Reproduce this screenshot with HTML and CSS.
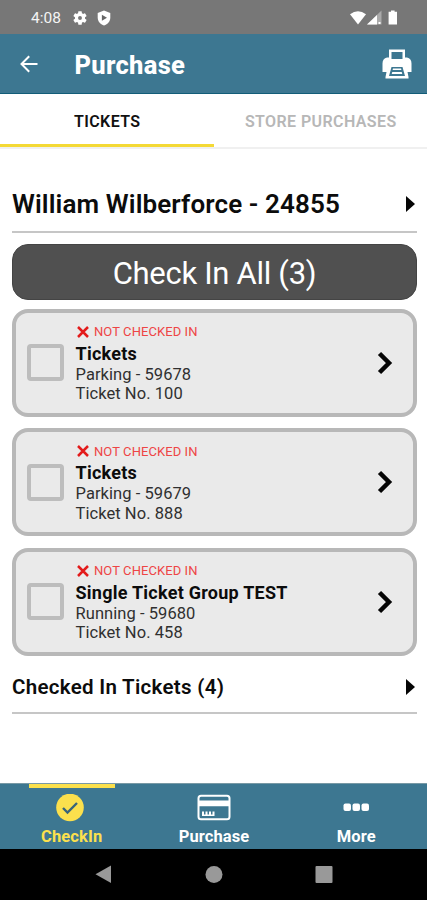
FILE: index.html
```html
<!DOCTYPE html>
<html lang="en">
<head>
<meta charset="utf-8">
<title>Purchase</title>
<link rel="stylesheet" href="styles.css">
</head>
<body>
<div class="status">
  <span class="clock">4:08</span>
  <svg class="gear" width="14" height="14" viewBox="2 2 20 20"><path fill="#fff" d="M19.14 12.94c.04-.3.06-.61.06-.94s-.02-.64-.07-.94l2.03-1.58a.5.5 0 0 0 .12-.61l-1.92-3.32a.49.49 0 0 0-.59-.22l-2.39.96c-.5-.38-1.03-.7-1.62-.94l-.36-2.54a.48.48 0 0 0-.48-.41h-3.84c-.24 0-.43.17-.47.41l-.36 2.54c-.59.24-1.13.57-1.62.94l-2.39-.96a.49.49 0 0 0-.59.22L2.74 8.87a.48.48 0 0 0 .12.61l2.03 1.58c-.05.3-.09.63-.09.94s.02.64.07.94l-2.03 1.58a.5.5 0 0 0-.12.61l1.92 3.32c.12.22.37.29.59.22l2.39-.96c.5.38 1.03.7 1.62.94l.36 2.54c.05.24.24.41.48.41h3.84c.24 0 .44-.17.47-.41l.36-2.54c.59-.24 1.13-.56 1.62-.94l2.39.96c.22.08.47 0 .59-.22l1.92-3.32a.5.5 0 0 0-.12-.61zM12 14.8a2.8 2.8 0 1 1 0-5.6 2.8 2.8 0 0 1 0 5.6z"/></svg>
  <svg class="shield" width="14" height="16" viewBox="0 0 14 16"><path fill="#fff" d="M7 .5 13.300 3v4.500c0 3.800-2.600 6.900-6.300 8-3.700-1.100-6.300-4.200-6.300-8V3z"/><path fill="#666" d="M4.900 4.700 10 7.700l-5.100 3z"/></svg>
  <span class="spacer"></span>
  <svg width="49" height="16" viewBox="0 0 49 16"><path fill="#fff" d="M0 4.200Q8-1.800 16 4.200L8 14.500z"/><path fill="#aaa" d="M31.500.5v14H17z"/><path fill="#fff" d="M27 5v9.500H17z"/><path fill="#fff" d="M28.500 12h2v2h-2zM41 .5h3.600v1.300h2.400V14.500h-8.400V1.800h2.400z"/></svg>
</div>
<header class="appbar">
  <svg width="18" height="18" viewBox="0 0 18 18" fill="none" stroke="#fff" stroke-width="2"><path d="M17.500 9H1.800M9.200 1.200 1.500 9l7.700 7.800"/></svg>
  <h1>Purchase</h1>
  <svg width="30" height="30" viewBox="0 0 30 30"><path fill="#fff" fill-rule="evenodd" d="M7 .5h16v8h2q4.500 1 4.500 6V23h-4l1 5v1.500H3.500V28l1-5h-4v-8.500q0-5 4.500-6h2zM9.500 3v7h11V3zM9.500 18 7 27h16l-2.500-9z"/><path fill="#fff" d="M11 19.500h8l.4 1.500h-8.800zM10.300 23h9.400l.6 2H9.700z"/></svg>
</header>
<nav class="tabs"><div class="tab active"><span class="t1">TICKETS</span></div><div class="tab"><span class="t2">STORE PURCHASES</span></div></nav>
<main>
  <div class="group owner"><span>William Wilberforce - 24855</span><i class="tri"></i></div>
  <button class="all"><span>Check In All (3)</span></button>
  <section class="cards">
    <article class="card"><i class="box"></i><div class="info"><div class="state"><svg width="12" height="12" viewBox="0 0 12 12"><path d="M1 1l10 10M11 1 1 11"/></svg><span>NOT CHECKED IN</span></div><h2 class="ticket">Tickets</h2><p>Parking - 59678</p><p>Ticket No. 100</p></div><svg class="chev" width="16" height="24" viewBox="0 0 16 24"><path d="M2.500 2.500 12 12l-9.500 9.500"/></svg></article>
    <article class="card"><i class="box"></i><div class="info"><div class="state"><svg width="12" height="12" viewBox="0 0 12 12"><path d="M1 1l10 10M11 1 1 11"/></svg><span>NOT CHECKED IN</span></div><h2 class="ticket">Tickets</h2><p>Parking - 59679</p><p>Ticket No. 888</p></div><svg class="chev" width="16" height="24" viewBox="0 0 16 24"><path d="M2.500 2.500 12 12l-9.500 9.500"/></svg></article>
    <article class="card"><i class="box"></i><div class="info"><div class="state"><svg width="12" height="12" viewBox="0 0 12 12"><path d="M1 1l10 10M11 1 1 11"/></svg><span>NOT CHECKED IN</span></div><h2 class="ticket">Single Ticket Group TEST</h2><p>Running - 59680</p><p>Ticket No. 458</p></div><svg class="chev" width="16" height="24" viewBox="0 0 16 24"><path d="M2.500 2.500 12 12l-9.500 9.500"/></svg></article>
  </section>
  <div class="group done"><span>Checked In Tickets (4)</span><i class="tri"></i></div>
</main>
<nav class="bottom">
  <div class="item on"><svg width="34" height="28" viewBox="0 0 34 28"><circle cx="17" cy="13.500" r="13.800" fill="#fbe04d"/><path d="m10 14 4.500 4.500 9.500-9.500" fill="none" stroke="#38647a" stroke-width="2.400"/></svg><span>CheckIn</span></div>
  <div class="item"><svg width="34" height="28" viewBox="0 0 34 28"><rect x="1.500" y="1.800" width="31" height="23.500" rx="2.500" fill="none" stroke="#fff" stroke-width="2"/><path fill="#fff" d="M2 6.500h31v5.800H2zM5 17.500h2v4H5zm3.500 0h2v4h-2zm3.500 0h2v4h-2zm3.500 0h2v4h-2zM5 20.500h12.500V22H5z"/></svg><span>Purchase</span></div>
  <div class="item"><svg width="34" height="28" viewBox="0 0 34 28" fill="#fff"><rect x="4.500" y="9.500" width="7.500" height="7.500" rx="2"/><rect x="13.500" y="9.500" width="7.500" height="7.500" rx="2"/><rect x="22.500" y="9.500" width="7.500" height="7.500" rx="2"/></svg><span>More</span></div>
</nav>
<footer class="system"><svg width="18" height="20" viewBox="0 0 18 20"><path fill="#999" d="M16 1.500v17.500L.5 10.300z"/></svg><svg width="18" height="20" viewBox="0 0 18 20"><circle cx="9" cy="10.500" r="8.500" fill="#999"/></svg><svg width="18" height="20" viewBox="0 0 18 20"><rect x=".5" y="2" width="17" height="17" rx="1" fill="#999"/></svg></footer>
</body>
</html>
```
FILE: styles.css
```css
* { box-sizing: border-box; }
body { margin: 0; width: 427px; height: 900px; overflow: hidden; display: flex; flex-direction: column; background: #fff; color: #0c0c0c; font-family: Roboto, sans-serif; }
h1, h2, p { margin: 0; }
svg { display: block; flex: none; }
.spacer { flex: 1; }
.status { height: 34px; flex: none; background: #777; display: flex; align-items: center; padding: 2px 28px 0 31px; }
.clock { color: #f4f4f4; font-size: 15.5px; width: 42px; }
.shield { margin-left: 10px; }
.appbar { height: 60px; flex: none; background: #3d7791; border-bottom: 1px solid #125d78; display: flex; align-items: center; padding: 0 15px 0 20px; color: #fff; }
.appbar h1 { flex: 1; margin-left: 36.5px; padding-top: 3px; font-size: 25.5px; font-weight: 800; letter-spacing: .3px; }
.tabs { height: 55px; flex: none; display: flex; border-bottom: 2px solid #f0f0f0; }
.tab { flex: 1; height: 53px; display: flex; justify-content: center; align-items: center; padding: 4px 0 0 1px; font-size: 16px; font-weight: 600; letter-spacing: .4px; color: #b7b7b7; border-bottom: 3px solid transparent; }
.tab.active { color: #111; border-color: #f4d935; }
main { flex: 1; padding: 0 10px 0 12px; }
.group { display: flex; align-items: center; justify-content: space-between; border-bottom: 2px solid #c6c6c6; font-weight: 600; }
.tri { border: 8px solid transparent; border-left: 9px solid #050505; border-right: 0; margin-right: 2px; }
.owner { height: 84px; padding-top: 27px; font-size: 26px; letter-spacing: .12px; }
.all { display: block; width: 405px; height: 56px; margin: 11px 0 9px; padding: 2px 0 0; border: 1px solid #444; border-radius: 16px; background: #505050; color: #fff; font: 400 31px Roboto, sans-serif; letter-spacing: -.3px; }
.cards { display: flex; flex-direction: column; gap: 11.7px; }
.card { height: 107.800px; border: 4px solid #b8b8b8; border-radius: 16px; background: #eaeaea; display: flex; align-items: center; padding: 0 20px 0 11px; }
.box { width: 37px; height: 37px; border: 4px solid #bdbdbd; border-radius: 4px; flex: none; }
.info { flex: 1; margin-left: 11.5px; }
.state { display: flex; align-items: center; gap: 5px; padding-left: 1.5px; height: 20px; color: #ee4545; font-size: 13px; letter-spacing: .08px; }
.state svg { stroke: #e31b1b; stroke-width: 2.500; }
.ticket { font-size: 18px; font-weight: 700; line-height: 23px; letter-spacing: .25px; }
.info p { font-size: 16.500px; line-height: 19.500px; color: #303030; letter-spacing: .06px; }
.chev { fill: none; stroke: #050505; stroke-width: 4.500; }
.done { height: 58px; font-size: 20.500px; padding-top: 6px; letter-spacing: .3px; }
.bottom { height: 66px; flex: none; display: flex; background: #3d7791; border-top: 1px solid #7899a5; color: #fff; }
.item { flex: 1; display: flex; flex-direction: column; align-items: center; padding: 10px 0 0 1px; font-size: 16.500px; font-weight: 700; gap: 5px; line-height: 20px; letter-spacing: .1px; position: relative; }
.on { color: #fbe04d; }
.item.on svg { margin-left: -4px; }
.on::before { content: ""; position: absolute; top: 0; left: 29px; width: 86px; height: 4px; background: #fbe04d; }
.system { height: 51px; flex: none; background: #000; display: flex; align-items: center; justify-content: center; gap: 92px; padding-bottom: 2px; }
```
